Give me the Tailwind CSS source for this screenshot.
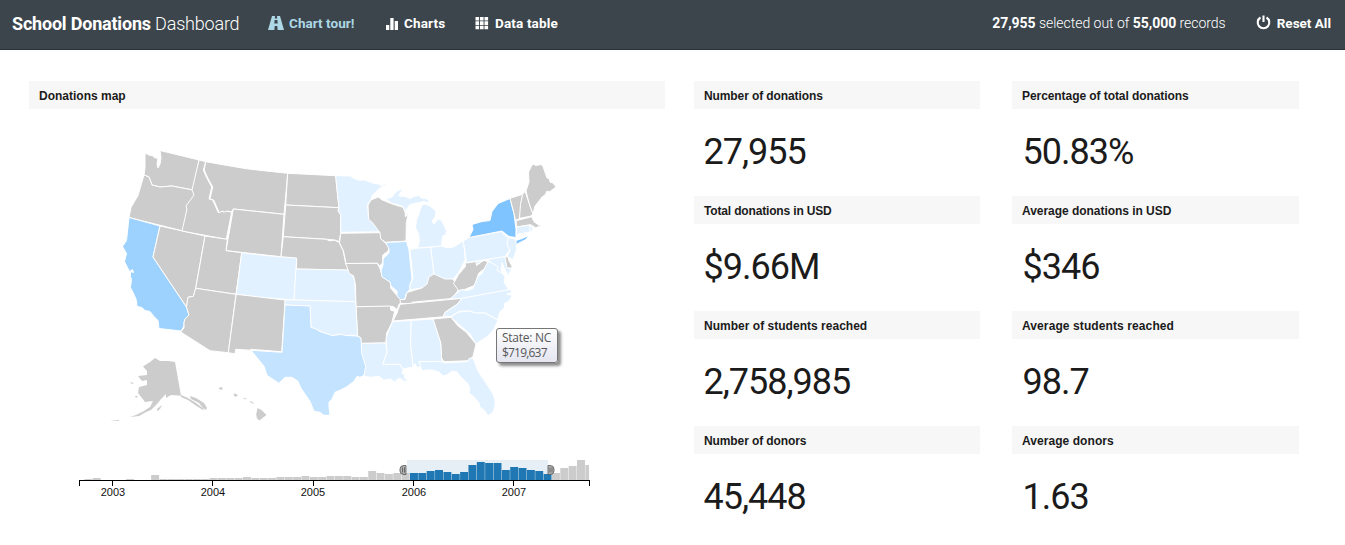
<!DOCTYPE html>
<html lang="en">
<head>
<meta charset="utf-8">
<title>School Donations Dashboard</title>
<script src="https://cdn.jsdelivr.net/npm/@tailwindcss/browser@4"></script>
</head>
<body class="h-[545px] overflow-hidden bg-white font-['Roboto',sans-serif] text-[#1b1b1b]">
<header class="flex h-[50px] items-center border-b border-[#2c3338] bg-[#3c454c] pr-[14px] pb-[2px] pl-3 text-[13.5px] font-bold whitespace-nowrap text-white">
  <h1 class="w-[256px] text-[18px] tracking-[-0.2px]">School Donations <span class="font-light">Dashboard</span></h1>
  <a class="flex w-[117px] items-center gap-[5px] tracking-[0.05px] text-[#add8e6]">
    <svg class="mb-[2px] h-4 w-4" viewBox="0 0 16 16" fill="currentColor"><path fill-rule="evenodd" d="M4 1h3l-.2 2.500h2.400L9 1h3l4 14H9.600l-.3-4H6.700l-.3 4H0zM6.600 5l-.3 3.500h3.400L9.400 5z"/></svg>
    <span>Chart tour!</span>
  </a>
  <a class="flex w-[90px] items-center gap-[5px] tracking-[0.15px]">
    <svg class="h-[14px] w-[14px]" viewBox="0 0 14 14" fill="currentColor"><path d="M1 8h3.300v5H1zM5.300 1h3.300v12H5.300zM9.700 4H13v9H9.700z"/></svg>
    <span>Charts</span>
  </a>
  <a class="flex items-center gap-[6px] tracking-[0.15px]">
    <svg class="mb-px h-[14px] w-[14px]" viewBox="0 0 14 14" fill="currentColor"><path d="M.5 1h3.600v3.600H.5zM5 1h3.600v3.600H5zM9.500 1h3.600v3.600H9.500zM.5 5.300h3.600v3.600H.5zM5 5.300h3.600v3.600H5zM9.500 5.300h3.600v3.600H9.500zM.5 9.700h3.600v3.600H.5zM5 9.700h3.600v3.600H5zM9.500 9.700h3.600v3.600H9.500z"/></svg>
    <span>Data table</span>
  </a>
  <p class="ml-auto text-[14px] font-light tracking-[-0.03px]"><b class="font-bold">27,955</b> selected out of <b class="font-bold">55,000</b> records</p>
  <a class="ml-[30px] flex items-center gap-[6px]">
    <svg class="mb-[2px] h-[15px] w-[15px]" viewBox="0 0 15 15" fill="none" stroke="currentColor" stroke-width="2.100"><path d="M4.500 2.500a5.800 5.800 0 1 0 6 0M7.500 .5v6.500"/></svg>
    <span>Reset All</span>
  </a>
</header>
<main class="flex items-start gap-[29px] pt-[31px] pl-[29px]">
  <section class="w-[636px]">
    <h2 class="flex h-7 items-center bg-[#f7f7f7] px-[10px] pt-px font-['Liberation_Sans',sans-serif] text-xs font-bold">Donations map</h2>
    <div class="relative">
      <svg class="block h-[341px] w-[636px]" viewBox="29 109 636 341" fill="#ccc" stroke="#fff" stroke-width="1" stroke-linejoin="round">
        <path id="WA" d="M145 153l4 2 4 1 2 2 3 0-1 6 1 4 2-4 1-6-1-7.500L199 160l-6 30-21-4-12 1-8-2-3-8-5-2 1-7z"/>
        <path id="OR" d="M144 175l5 2 3 8 8 2 12-1 21 4 2 5-8 11 1 3-5 22-54-13.500 2-10 7-12z"/>
        <path id="CA" fill="#9dd2ff" d="M129 217.500l31 8.500-7 31 33.500 50 2.500 8-4 4-1 4 0 3-3 5-22-2.500-1-8-4-4-4-5-5-1-3-3-5-1-.5-6-2-5-4-8 1-8-1-3 0-5 3 1-1-3-3 2-3-6-2-4 2-8-4-7 4-6z"/>
        <path id="NV" d="M160 226l45 10-9.300 52.300-2.300 8-5.400 1-1.500 9.700-33.500-50z"/>
        <path id="ID" d="M199 160l6.700 1.700-2.400 8.300 3 7 5.400 10-2.700 12 3.700 1 5.600 12.700 3-1.700 2 1 3-1 4 1 2-3-6 30.300-44.300-8.300 5-22-1-3 8-11-2-5z"/>
        <path id="MT" d="M205.700 161.700Q246 170 287.700 173.300L284 214.300 233.300 209l-2 3-4-1-3 1-2-1-3 1.700-5.600-12.700-3.700-1 2.700-12-5.400-10-3-7z"/>
        <path id="WY" d="M233.300 209l50.700 5.300-3 42.400-55-6z"/>
        <path id="UT" d="M205 236l22.300 3.300L226 250.700l15.700 2-5.700 41.600-40.300-6z"/>
        <path id="AZ" d="M195.700 288.300l40.300 6-7.700 58.400-18.300-2-29.300-18.700 3.300-4 0-6 1-3 4-4-2.500-8 1.500-9.700 5.400-1z"/>
        <path id="CO" fill="#e1f1ff" d="M241.700 252.700Q270 256.500 296.700 258L294 300Q263 298 236.200 294.300z"/>
        <path id="NM" d="M236.200 294.300l49 5.700-3.500 51.700-31-2.400 1 1-16-1-.7 4.500-6.700-1.100z"/>
        <path id="ND" d="M287.700 173.300l48 2.400 1.300 14 2 18-53.300-2.700z"/>
        <path id="SD" d="M285.700 205l53.300 2.700-1 3 2.700 4v18.600l-1.700 8.400-4-1.700-8.300-.7-43.400-2.600z"/>
        <path id="NE" d="M283.300 236.700l43.400 2.600 2 1.500 6-.5 4.300 2 4 8 2.700 13 3 7-52.200-1.300.2-11-15.700-1.300z"/>
        <path id="KS" fill="#e1f1ff" d="M296 269l52.700 1 4 2-1 3 3 5 1 21.700L294 300z"/>
        <path id="MN" fill="#e1f1ff" d="M335.700 175.700l15 .3 0-4 1 5.300 6 2.700 7 0 8 3 5 1 9 1-7 3-7 7-2 5-3 4 .7 14.300 4.600 4 7 9.400-39.300.6V215l-2.700-4 1-3-2-18z"/>
        <path id="IA" d="M340.700 233.300l39.300-.6 2 7 3 3 4.300 4.600-1.500 4-5 3.700-.3 8-3 3-2-2.700-31.500.2-2.500-12.500-4-8z"/>
        <path id="WI" d="M371 200l7.300-3 4 3 8 3.300 9 3 4 1 2 5.700 0 4 3-4-2 10-.3 18-20.300 1.300-5-3.300-.7-6.300-7-9.400-4.300-4-.7-14.300z"/>
        <path id="MO" d="M345.700 263.500l31.500-.2 2.500 4.700 2.600 8 7.400 5 1 3 0 4 4 5 5 5 2.500 4-3 2-2 5.500-4-3-37.200.3-.5-22-2-9-4-2z"/>
        <path id="IL" fill="#c3e3ff" d="M385.700 242.500L406.500 241.500l2.500 8.500 3 29-2 5 0 5-4 5-1 5-4 1-4-4 0-5-6-5-1-4-8-5-1-6 2-6 0-6 6-6 0-4z"/>
        <path id="UP" fill="#e1f1ff" d="M386 199l6-2 3-4 4-3 4-1-3 4-1 3 6 .5 5 2 4-2 5-1 2 2.500 5 .5 3 2-1 2-4-1-5 1-5 1-4 1-3 4-2 3-2-5-6-2-5-1zM380 185l5-1 3 1-4 1z"/>
        <path id="MI" fill="#e1f1ff" d="M422 205l3-1 5 2 5 4 1 3-1 4-3 4 2 3 4-5 3 1 3 5 2.500 6-1 4-3 1-1 10-24 2 2-7-1-8-3-5 1-8 2-5 1-4z"/>
        <path id="IN" fill="#e1f1ff" d="M410 249.500l6-1.200 15-1 3 27.700-3 3-3 6-6 4-7 1-4 1-1.500-3 3.500-9z"/>
        <path id="OH" fill="#e1f1ff" d="M430.700 247.300l11-1.300 6 2 6-1 10-6.300 1.500 19.300-7 13-5 6-9 1-10-5z"/>
        <path id="KY" d="M400.500 303.500l-.5-4 5 0 2-7 5-1.500 10-3 5-4 2-7 5-3 11 5 8 0 4 7 2 3-7 9.500-40 3.700-.5 1.500z"/>
        <path id="TN" d="M400 304.300l62-6-5 6-12 8-2 4.500L393 321l4-8z"/>
        <path id="WV" d="M465 260l1.500 3 9.500-1.500.5 4 7-5 5 1-4 7-6 5-4 12-10 4-6 1-5-7 5-9 7-8z"/>
        <path id="PA" fill="#e1f1ff" d="M463.300 241l6-3.500 32.400-6 3.300 4 3.500 2-1.500 6 3 6-5 7.200-38.500 6z"/>
        <path id="MD" fill="#e1f1ff" d="M476 261.500l29-5 3 12 4 0-4 7-4-8-2-5-1 8 3 4-8-4-2-5-5-5-6 0-6 4z"/>
        <path id="DE" d="M505 256.700l3 .3 1 4 3 5 0 2-5 0z"/>
        <path id="NJ" fill="#e1f1ff" d="M508.500 237.500l7.500 2 .7 10-3.700 10-6-3 3-6-3-6z"/>
        <path id="VA" fill="#e1f1ff" d="M488 261.500l3 1 7 4-1 4 6 3 2 4-1 4 2 4 3 4.500-48 8.500-11 .3 10-8.300 2-1 5 1 6-2 5-12 4-3z"/>
        <path id="NC" fill="#e1f1ff" d="M462 298.300l48.700-9 1 3-5 2 6 1-4 6-4 2 0 4-5 5-2 7.500-12.500-7-9 .5-7-2.500-10 .5-8 5-8 .5 2-4.500 12-8z"/>
        <path id="SC" fill="#e1f1ff" d="M451 317.300l7-5 10-1.300 8 2 9 0 13 7-4 9-6 7-12 8-6-10z"/>
        <path id="GA" d="M433 319l18-1.700 7 8.700 8 6 10 12-3 12.500-5 4.200-24 1-2.500-3.700-.8-15z"/>
        <path id="AL" fill="#e1f1ff" d="M411 320.500l22-1.500 7.700 24 .8 15 1 3.500-23.500 0 2 5-4 1-2-4-2 3.500-2.500-22z"/>
        <path id="MS" fill="#e1f1ff" d="M393 321.500l18-1-.5 24.500 2.500 22-10 2-3-4.500-17.300 0 4.300-12.800-1-13 3-9z"/>
        <path id="FL" fill="#e1f1ff" d="M419 361.700l23-.2 2 1.500 24-1.500 1-3 4-.5 5 13 8 12 7 11 2 6 0 6-2 6-5 4-3-5-5-4-1-4-5-6-5-4 1-4-2-5-8-8-3-4-5-1-5 4-4 1-4-4-7-2-6 0-4 1z"/>
        <path id="LA" fill="#e1f1ff" d="M361 343.300l24.700-.6 1.300 9-4.300 12.600h17.300l3 6-1 3 3 2-1 2 4 4-4 0-4-3-3 1-2 3-4-3-3 0-4 1-5-4-8 1-7-1 0-6 .5-7-3.500-10z"/>
        <path id="AR" d="M356 306.800l34.700-.8 0 4 4 1.500-3 11.500-5 10-1 9.700-24.700.6-.5-5.500-3-2z"/>
        <path id="OK" fill="#e1f1ff" d="M285 300l9 0 61.700 1.700 2 34.300-7-1-6 1-5-2-8 2-12-5-8.700-3.500L310 306l-25-1z"/>
        <path id="TX" fill="#c3e3ff" d="M285 305l25 1 1 21.500 4 1 5 3 12 4 9-1 6 1 10 .5 4 2 .7 15.300 4 13-1.700 9-4 2-3-1-3 5-8 6-6 3-5 2-3 7-3 3 0 5 1 8-6 0-4-3-6-1-4-10-9-13-3-7-6-4-7 0-6 6-12-8-3-9-13-16 31 2z"/>
        <path id="NY" fill="#80c4ff" d="M469 237.500l4-8-1-5 10-3 8-1 2-9 6-8 12-5 4 15 2 16 0 8-7-1-7-5.500zM516 240.500l6-2 7-3-3 4-10 5z"/>
        <path id="VT" d="M510 198.300l12.700-4-1.700 10-1 14-4.500 2.200-1.500-7z"/>
        <path id="NH" d="M522.700 194.300l2.300-3 3.500 10 4.500 13-3 2-10.500 2 1-14z"/>
        <path id="ME" d="M526 191l3-9-.5-10 4-8 3.500 1.500 5-1 2 2 4 11.500 2.500 1 .5 3 3 1 3 4-4 3-3 2-2-1-2 4-3 2-3 4-4 5-2 8-4-11z"/>
        <path id="MA" d="M516 220.700l15.700-4 2.300 5 4 3 3.700 1-6 2-5-3-14 2.300z"/>
        <path id="CT" fill="#e1f1ff" d="M516.700 227l13-2 .5 7-12 2-2 2z"/>
        <path id="RI" fill="#e1f1ff" d="M529.700 225l3 2 0 3-2.500 2z"/>
        <g stroke="none">
          <path id="AK" d="M155 358l-5 4-7 4.500 4 4.500 0 4-9 1 4 5 5-1 0 5-8 2-1 6 4 5 3 4 8-1-3 6-6 4-8 4-6 2 9-1 7-4 5-2 6-6 4-5 5-5 0 4 5-3 10 .7-6-33.700-7-1-8 0zM119 420l-9 .6 9 .4zM157 409l5-4-2 4-3 2zM181 395l7 3 8 5 8 6-1 1-8-5-7-5-7-3zM190 396l6 2 8 5 3 5-1 2-4-3-3-4-8-4zM130 382l4 1-2 1zM135 396l3 0-2 2z"/>
          <path id="HI" d="M218.500 388.500l2-1.500 2.500 1-1.500 2zM233.500 394l2-.5 2.500 2-3 1.500zM243 398l5 1-4 .3zM249.500 401l3 1 2 2-4-1.500zM257.500 408l4 2 5 5-4 3-3 2.500-2.500-2-.8-4z"/>
        </g>
      </svg>
      <div class="absolute top-[219px] left-[467px] h-[35px] w-[62px] rounded-[3px] border border-[#767676] bg-linear-to-b from-white to-[#e4e5f0] pt-px pl-[5px] font-['Open_Sans',sans-serif] text-[12px] leading-[15px] tracking-[-0.25px] text-[#575757] shadow-[3px_3px_3px_rgba(0,0,0,0.45)]">State: NC<br><span class="tracking-[-0.8px]">$719,637</span></div>
    </div>
    <svg class="block h-[55px] w-[636px] font-['Liberation_Sans',sans-serif] text-[11px]" viewBox="29 450 636 55">
      <path fill="#e6eff5" d="M407 460h141v20H407z"/>
      <g id="bars"></g>
      <path fill="none" stroke="#000" shape-rendering="crispEdges" d="M79.500 486v-5.500h510v5.500M112.500 480v6M212.500 480v6M313.500 480v6M413.500 480v6M513.500 480v6"/>
      <g text-anchor="middle" fill="#111"><text x="113" y="496">2003</text><text x="213" y="496">2004</text><text x="313" y="496">2005</text><text x="414" y="496">2006</text><text x="514" y="496">2007</text></g>
      <g fill="#aaa" fill-opacity=".9" stroke="#555" stroke-opacity=".8" stroke-width="1">
        <path d="M406 465.500h-2q-4 0-4 3.500v2q0 3.500 4 3.500h2zM402.500 467.500v5M404.500 467.500v5"/>
        <path d="M548 465.500h2q4 0 4 3.500v2q0 3.500-4 3.500h-2zM550 467.500v5M552 467.500v5"/>
      </g>
    </svg>
  </section>
  <section class="grid grid-cols-[286px_287px] gap-x-8" id="stats"></section>
</main>
<script>
const stats = [
  ["Number of donations", "27,955", -0.1],
  ["Percentage of total donations", "50.83%", -0.07],
  ["Total donations in USD", "$9.66M", -0.16],
  ["Average donations in USD", "$346", -0.04],
  ["Number of students reached", "2,758,985", 0.02],
  ["Average students reached", "98.7", 0.1],
  ["Number of donors", "45,448", -0.1],
  ["Average donors", "1.63", 0.06]
];
document.getElementById("stats").innerHTML = stats.map(([label, value, spacing], i) => `<article class="h-[115px]"><h2 class="flex h-7 items-center bg-[#f7f7f7] px-[10px] pt-px font-['Liberation_Sans',sans-serif] text-xs font-bold" style="letter-spacing:${spacing}px">${label}</h2><p class="pt-[22px] ${i % 2 ? "pl-[10.5px]" : "pl-[9.5px]"} text-[36px] leading-[42px] tracking-[-1px]">${value}</p></article>`).join("");
const heights = [0,1,2,0,0,0,1,0,0,5,1,1,1,1,1,1,2,2,2,2,3,2,2,2,3,3,3,4,3,3,4,4,4,3,3,9,7,6,7,7,7,7,9,10,8,6,8,15,18,17,17,10,13,12,10,9,6,7,12,14,20,15];
const step = 8.35, first = 410 - 40 * step;
document.getElementById("bars").innerHTML = heights.map((h, i) => {
  const x = Math.max(79, first + i * step), w = Math.min(step - 0.4, 589 - x);
  return h && w > 0 ? `<rect x="${x}" y="${480 - h}" width="${w}" height="${h}" fill="${i >= 40 && i <= 56 ? "#1f77b4" : "#ccc"}"/>` : "";
}).join("");
</script>
</body>
</html>
